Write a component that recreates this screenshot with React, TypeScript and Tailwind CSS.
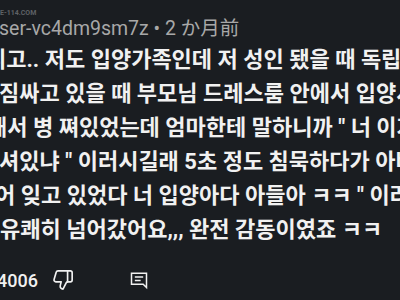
import { ThumbsDown } from "lucide-react";

const lines = [
  { text: "니고.. 저도 입양가족인데 저 성인 됐을 때 독립하", cls: "-ml-[14px]" },
  { text: "짐싸고 있을 때 부모님 드레스룸 안에서 입양서류", cls: "-ml-[1px]" },
  { text: "해서 병 쪄있었는데 엄마한테 말하니까 \" 너 이거", cls: "-ml-[13px]" },
  { text: "셔있냐 \" 이러시길래 5초 정도 침묵하다가 아버지", cls: "-ml-[1px]" },
  { text: "어 잊고 있었다 너 입양아다 아들아 ㅋㅋ \" 이러", cls: "-ml-[5px]" },
  { text: "유쾌히 넘어갔어요,,, 완전 감동이였죠 ㅋㅋ", cls: "ml-0" },
];

function CommentIcon() {
  return (
    <svg width="20" height="20" viewBox="0 0 24 24" fill="none" stroke="#f1f1f1" strokeWidth="1.8" strokeLinejoin="miter">
      <path d="M3 4h18v17l-4-4H3z" />
      <path d="M7 8.5h10M7 12.5h7" />
    </svg>
  );
}

export default function App() {
  return (
    <div className="relative w-[400px] h-[300px] overflow-hidden bg-[#1a1d21] font-['Roboto','Noto_Sans_CJK_KR',sans-serif]">
      <div className="absolute left-0 top-[9px] text-[7px] leading-[8px] text-[#5f6266] font-bold">E-114.COM</div>

      <div className="h-[35px] pt-[19px] text-[19.5px] leading-[19px] text-[#a8a8a8] whitespace-nowrap -ml-[1px]">
        ser-vc4dm9sm7z • 2 か月前
      </div>

      <div className="flex flex-col pt-[8px]">
        {lines.map((l, i) => (
          <div key={i} className={`h-[34px] text-[22px] leading-[34px] font-bold text-[#f1f1f1] whitespace-nowrap ${l.cls}`}>
            {l.text}
          </div>
        ))}
      </div>

      <div className="mt-[18px] h-[30px] flex items-center text-[#f1f1f1]">
        <span className="-ml-[3px] text-[18px] font-medium w-[55px]">4006</span>
        <ThumbsDown size={22} strokeWidth={1.8} />
        <div className="ml-[55px]">
          <CommentIcon />
        </div>
      </div>
    </div>
  );
}
